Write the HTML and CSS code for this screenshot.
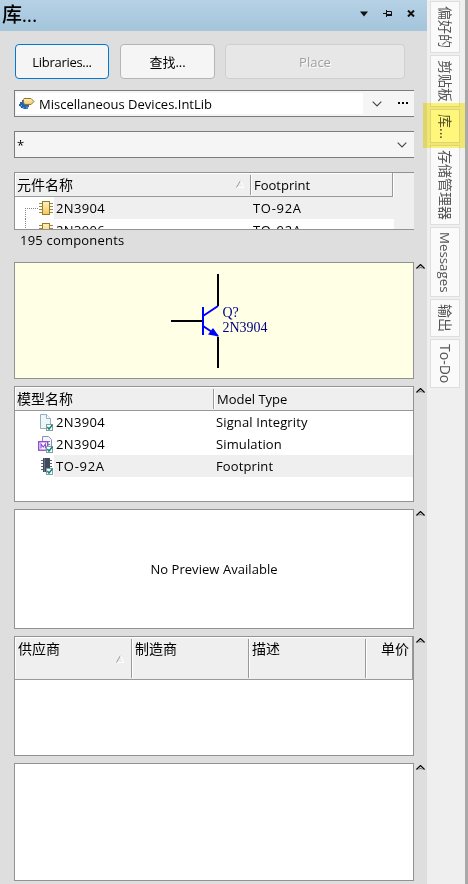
FILE: index.html
```html
<!DOCTYPE html>
<html lang="zh-CN">
<head>
<meta charset="utf-8">
<title>库...</title>
<link rel="stylesheet" href="styles.css">
</head>
<body>
<svg width="0" height="0" class="defs" aria-hidden="true">
  <defs>
    <linearGradient id="gold" x1="0" y1="0" x2="0" y2="1"><stop offset="0" stop-color="#fff1bd"/><stop offset="1" stop-color="#f6c75d"/></linearGradient>
    <symbol id="chip" viewBox="0 0 14 14"><path d="M0 2.500h14M0 5.500h14M0 8.500h14M0 11.500h14" stroke="#a08a38"/><rect x="3.500" y=".5" width="7" height="13" fill="url(#gold)" stroke="#987b2c"/></symbol>
    <symbol id="sort" viewBox="0 0 9 8"><path d="M.5 7.500L4.500.5" stroke="#999" fill="none"/><path d="M4.500.5l3.500 7H1" stroke="#fff" fill="none"/></symbol>
    <symbol id="check" viewBox="0 0 7 7"><rect x=".5" y=".5" width="6" height="6" fill="#fff" stroke="#8c9c9c"/><path d="M1.300 3l1.700 2L6.500.8" stroke="#008c82" stroke-width="1.500" fill="none"/></symbol>
    <symbol id="up" viewBox="0 0 9 5"><path d="M.4 4.500L4.500.6l4.100 3.900" stroke="#000" stroke-width="1.300" fill="none"/><path d="M3 4.500L4.500 3 6 4.500" stroke="#333" stroke-width=".8" fill="none"/></symbol>
    <symbol id="down" viewBox="0 0 10 6"><path d="M.7.7L5 5 9.300.7" stroke="#444" stroke-width="1.100" fill="none"/></symbol>
  </defs>
</svg>
<div class="window">
  <main class="panel">
    <header class="title">
      <h1>库...</h1>
      <svg class="t-menu" width="8" height="6" viewBox="0 0 8 6"><path d="M0 .5h8L4 5.500z" fill="#111"/></svg>
      <svg class="t-pin" width="9" height="7" viewBox="0 0 9 7"><path d="M0 3.500h3M3.500 0v7M4 1.500h4.500v4M4 4.500h5" stroke="#111" fill="none"/><path d="M4 4h5v2H4z" fill="#111"/></svg>
      <svg class="t-close" width="8" height="7" viewBox="0 0 8 7"><path d="M1 .5l6 6M7 .5l-6 6" stroke="#111" stroke-width="2"/></svg>
    </header>
    <div class="buttons">
      <button class="btn primary">Libraries...</button>
      <button class="btn">查找...</button>
      <button class="btn off" disabled>Place</button>
    </div>
    <div class="combo lib">
      <div class="value">
        <svg width="16" height="13" viewBox="0 0 16 13"><path d="M1 5h2V3h2V2h5v8H9v2H4v-1H2V9H0V7h1z" fill="#2861b0"/><path d="M1 10l2-2M4 12l1-2M8 12V9" stroke="#6ca0df"/><path d="M5 1.500h7l3 3-3 3H6L4.500 6V2.500z" fill="url(#gold)" stroke="#8d7634"/></svg>
        <span>Miscellaneous Devices.IntLib</span>
      </div>
      <svg class="arrow" width="10" height="6"><use href="#down"/></svg>
      <svg class="dots" width="10" height="2"><path d="M0 0h2v2H0zM4 0h2v2H4zM8 0h2v2H8z"/></svg>
    </div>
    <div class="combo filter"><span>*</span><svg class="arrow" width="10" height="6"><use href="#down"/></svg></div>
    <section class="box parts">
      <div class="grid">
        <div class="head"><div class="cell first zh">元件名称<svg class="sort" width="9" height="8"><use href="#sort"/></svg></div><div class="cell">Footprint</div></div>
        <div class="row"><i class="tree"></i><svg width="14" height="14"><use href="#chip"/></svg><div class="data on"><span class="wide">2N3904</span><span class="wider">TO-92A</span></div></div>
        <div class="row"><i class="tree"></i><svg width="14" height="14"><use href="#chip"/></svg><div class="data"><span class="wide">2N3906</span><span class="wider">TO-92A</span></div></div>
      </div>
    </section>
    <p class="count">195 components</p>
    <div class="fold symbol">
      <section class="box">
        <svg width="398" height="115" viewBox="15 263 398 115">
          <path d="M218 274v32M171 321h31M218 337v31" stroke="#000" stroke-width="2" fill="none"/>
          <path d="M203 307v28M203 316l15-10M203 326l15 10" stroke="#00f" stroke-width="2" fill="none"/>
          <path d="M213 328l6 8.500-11-2z" fill="#00f"/>
          <text x="222.500" y="316.500">Q?</text><text x="222.500" y="332">2N3904</text>
        </svg>
      </section>
      <svg class="up" width="9" height="5"><use href="#up"/></svg>
    </div>
    <div class="fold models">
      <section class="box">
        <div class="head"><div class="cell first zh">模型名称</div><div class="cell">Model Type</div></div>
        <div class="row"><svg width="16" height="17" viewBox="0 0 16 17"><path d="M3.500.5h6l4 4v10h-10z" fill="#edf6fb" stroke="#98adb9"/><path d="M9.500.5v4h4" fill="#fff" stroke="#98adb9"/><use href="#check" x="9" y="10" width="7" height="7"/></svg><div class="data"><span class="wide">2N3904</span><span class="type">Signal Integrity</span></div></div>
        <div class="row"><svg width="16" height="17" viewBox="0 0 16 17"><path d="M5.500.5h6l3 3v10h-9z" fill="#f3f5fc" stroke="#8491b0"/><path d="M9 5.500h4M9 8.500h4" stroke="#7584ac"/><rect x="1.700" y="5.700" width="9" height="8.500" fill="#fff" stroke="#8e4fd0" stroke-width="1.400"/><path d="M4 12.500v-4.500l2.200 3 2.300-3v4.500" stroke="#8e4fd0" fill="none" stroke-width="1.200"/><use href="#check" x="9" y="10" width="7" height="7"/></svg><div class="data"><span class="wide">2N3904</span><span class="type">Simulation</span></div></div>
        <div class="row"><svg width="16" height="17" viewBox="0 0 16 17"><path d="M4 2.500h11M4 5.500h11M4 8.500h11M4 11.500h11" stroke="#606779"/><path d="M6 0h7v14H6z" fill="#424a60"/><path d="M7.500 0v14" stroke="#667087"/><use href="#check" x="9" y="10" width="7" height="7"/></svg><div class="data on"><span class="wider">TO-92A</span><span class="type">Footprint</span></div></div>
      </section>
      <svg class="up" width="9" height="5"><use href="#up"/></svg>
    </div>
    <div class="fold preview"><section class="box">No Preview Available</section><svg class="up" width="9" height="5"><use href="#up"/></svg></div>
    <div class="fold suppliers">
      <section class="box">
        <div class="head zh"><div class="cell">供应商<svg class="sort" width="9" height="8"><use href="#sort"/></svg></div><div class="cell">制造商</div><div class="cell">描述</div><div class="cell price">单价</div></div>
      </section>
      <svg class="up" width="9" height="5"><use href="#up"/></svg>
    </div>
    <div class="fold last"><section class="box"></section><svg class="up" width="9" height="5"><use href="#up"/></svg></div>
  </main>
  <nav class="tabs">
    <div class="tab fav">偏好的</div>
    <div class="tab clip">剪贴板</div>
    <div class="tab active">库...</div>
    <div class="tab store">存储管理器</div>
    <div class="tab msg">Messages</div>
    <div class="tab out">输出</div>
    <div class="tab todo">To-Do</div>
  </nav>
</div>
</body>
</html>
```
FILE: styles.css
```css
* { box-sizing: border-box; }
body { margin: 0; font: 13px/22px "Open Sans", "Noto Sans CJK SC", sans-serif; color: #000; overflow: hidden; }
svg { display: block; flex: none; }
.defs { position: absolute; }
.window { display: grid; grid-template-columns: 427px 41px; height: 884px; }
.panel { background: #dedede; display: flex; flex-direction: column; }
.title { height: 31px; flex: none; background: linear-gradient(#b6d1e6, #a4c5da); display: flex; align-items: center; padding: 0 12px 4px 2px; }
.title h1 { font: 500 20px/28px "Open Sans", "Noto Sans CJK SC", sans-serif; margin: 3px auto 0 0; letter-spacing: -.2px; }
.t-pin { margin-left: 15px; }
.t-close { margin-left: 15px; }
.buttons { display: flex; padding: 13px 0 0 15px; height: 59px; flex: none; }
.btn { font: inherit; height: 35px; width: 95px; margin: 0 10px 0 0; padding: 0; border: 1px solid #b5b5b5; border-radius: 4px; background: #f5f5f5; color: #000; }
.btn.primary { width: 94px; margin-right: 11px; border-color: #0078d4; letter-spacing: -.3px; }
.btn.off { width: 180px; background: #e7e7e7; border-color: #d0d0d0; color: #a0a0a0; text-shadow: 1px 1px #fff; }
.zh { font-size: 14px; }
.wide { letter-spacing: .35px; }
.wider { letter-spacing: .7px; }
.type { letter-spacing: .12px; }
.combo { width: 400px; height: 27px; flex: none; margin-left: 14px; border: 1px solid #7c7c7c; border-right: 0; background: #f5f5f5; display: flex; align-items: center; }
.value { width: 347px; height: 21px; margin-left: 1px; background: #fff; display: flex; align-items: center; padding-left: 3px; gap: 4px; }
.lib .arrow { margin-left: 9px; }
.dots { margin-left: 16px; margin-top: -2px; }
.filter { margin-top: 14px; padding: 0 7px 0 2px; justify-content: space-between; }
.box { width: 400px; border: 1px solid #929292; background: #fff; overflow: hidden; }
.parts { height: 58px; flex: none; margin: 14px 0 0 14px; background: #efefef; border-right: 0; }
.grid { width: 379px; background: #fff; }
.head { height: 24px; display: flex; background: #efefef; border-bottom: 1px solid #999; box-shadow: inset 1px 1px #fff; padding-top: 2px; }
.cell { position: relative; padding-left: 3px; height: 20px; line-height: 20px; border-left: 1px solid #999; box-shadow: inset 1px 0 #fff; flex: 1; white-space: nowrap; }
.cell:first-child { border-left: 0; box-shadow: none; padding-left: 2px; }
.cell.first { flex: none; width: 235px; }
.parts .head { width: 378px; border-right: 1px solid #999; }
.sort { position: absolute; right: 5px; top: 5px; }
.row { height: 22px; display: flex; align-items: center; padding-left: 10px; }
.tree { width: 13px; height: 22px; margin-right: 1px; flex: none; background: repeating-linear-gradient(90deg, #888 0 1px, transparent 1px 2px) 0 11px / 13px 1px no-repeat, repeating-linear-gradient(#888 0 1px, transparent 1px 2px) 0 11px / 1px 11px no-repeat; }
.row + .row .tree { background-size: 13px 1px, 1px 22px; background-position: 0 11px, 0 0; }
.data { flex: 1; height: 22px; margin-left: 1px; padding-left: 2px; display: flex; }
.data span:first-child { width: 197px; }
.data.on { background: #efefef; }
.count { margin: 0 0 0 20px; height: 32px; flex: none; line-height: 20px; letter-spacing: .2px; }
.fold { display: flex; margin-left: 14px; flex: none; }
.fold .up { margin: 2px 0 0 2px; }
.symbol { height: 117px; }
.symbol .box { background: #ffffe6; }
.symbol text { font: 14px "Liberation Serif", serif; fill: #000080; }
.models { height: 116px; margin-top: 7px; }
.models .cell.first { width: 198px; }
.models .row { padding-left: 22px; }
.models .data span:first-child { width: 160px; }
.preview { height: 120px; margin-top: 7px; }
.preview .box { display: grid; place-items: center; letter-spacing: .05px; }
.suppliers { height: 120px; margin-top: 7px; }
.suppliers .head { height: 43px; border-right: 1px solid #999; }
.suppliers .cell { flex: none; width: 117px; height: 39px; }
.suppliers .cell:first-child { width: 116px; padding-left: 3px; }
.suppliers .sort { top: 16px; right: 6px; }
.suppliers .cell.price { width: 47px; padding: 0 3px 0 0; text-align: right; }
.last { height: 118px; margin-top: 7px; }
.tabs { background: #efefef; border-right: 3px solid #a9a9a9; padding: 1px 0 0 3px; display: flex; flex-direction: column; gap: 2px; }
.tab { width: 30px; border: 1px solid #dedede; background: #fafafa; color: #555; writing-mode: vertical-rl; text-orientation: sideways; line-height: 28px; padding-top: 4px; white-space: nowrap; position: relative; flex: none; font-size: 14px; }
.fav { height: 52px; }
.clip { height: 52px; }
.active { height: 34px; background: #fff; }
.active::after { content: ""; position: absolute; left: -8px; right: -6px; top: -7px; bottom: -6px; background: #fff67c; mix-blend-mode: multiply; z-index: 2; }
.store { height: 80px; }
.msg { height: 70px; font-size: 13.3px; }
.out { height: 38px; }
.todo { height: 49px; }
```
